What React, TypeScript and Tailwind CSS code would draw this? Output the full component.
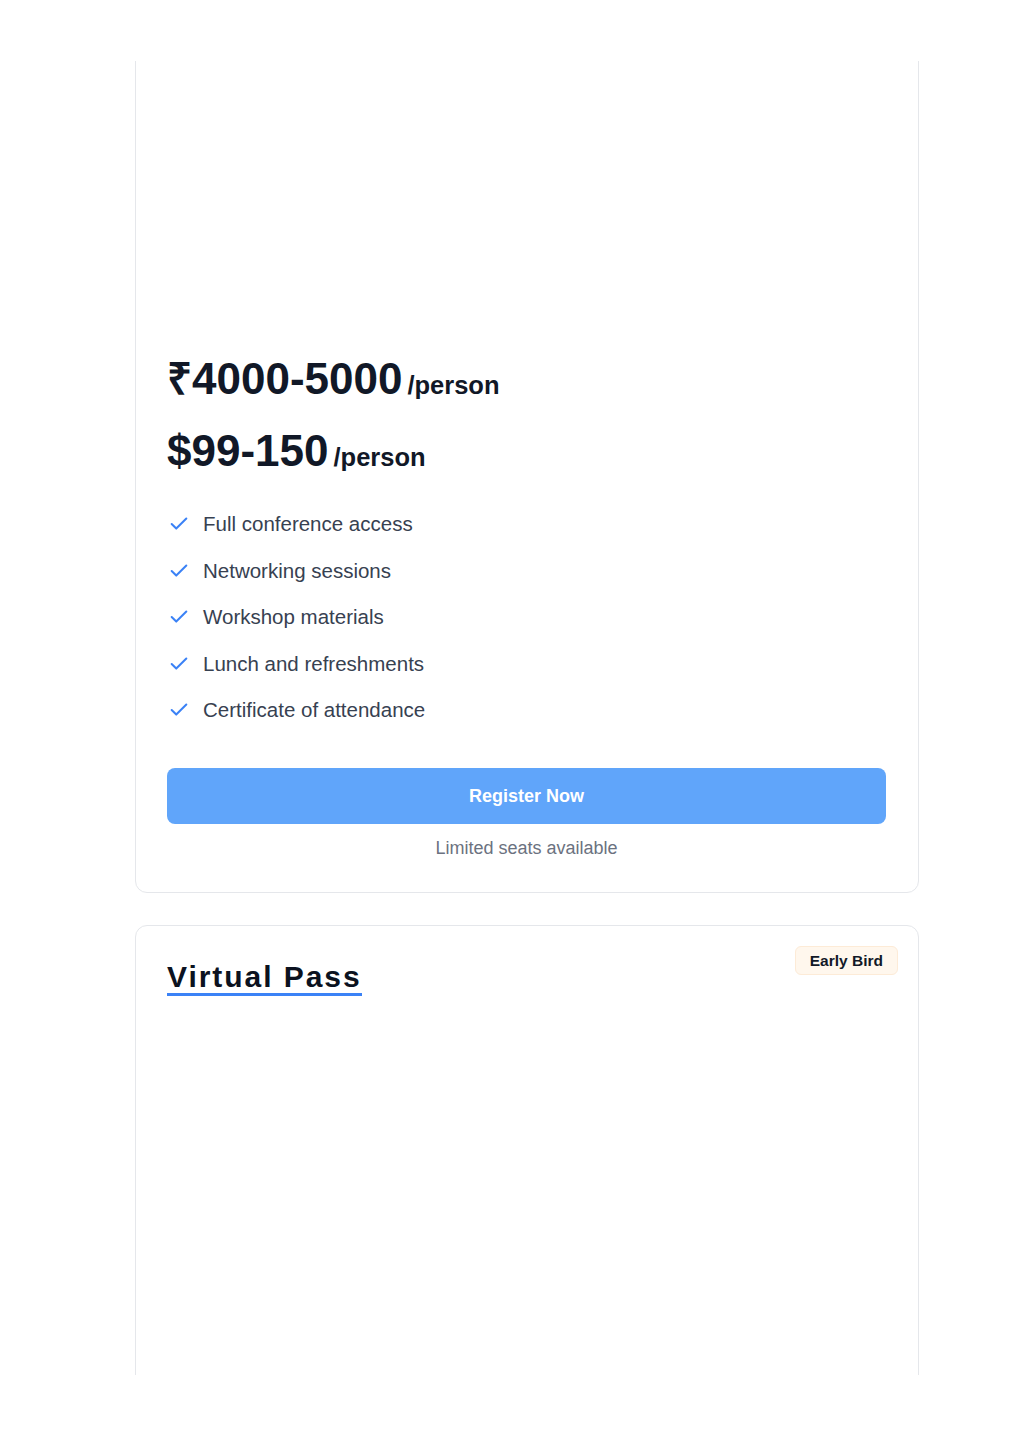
import React from "react";

const features = [
  "Full conference access",
  "Networking sessions",
  "Workshop materials",
  "Lunch and refreshments",
  "Certificate of attendance",
];

function CheckIcon() {
  return (
    <svg width="22" height="22" viewBox="0 0 24 24" fill="none" stroke="#3b82f6" strokeWidth="2.2" strokeLinecap="round" strokeLinejoin="round" className="shrink-0">
      <path d="M20 6 9 17l-5-5" />
    </svg>
  );
}

export default function App() {
  return (
    <div className="bg-white min-h-[1449px] pt-[61px] font-['Liberation_Sans',Arial,sans-serif]">
      <div className="h-[1314px] overflow-hidden">
        <div className="ml-[135px] w-[784px] flex flex-col gap-8 -mt-[40px]">
          <div className="border border-gray-200 rounded-xl bg-white pl-[31px] pr-8 pb-[30px] pt-[329px]">
            <div className="flex items-baseline gap-[5px] text-[#111827]">
              <span className="text-[44px] font-bold leading-[56px]">₹4000-5000</span>
              <span className="text-[25.5px] font-bold">/person</span>
            </div>
            <div className="flex items-baseline gap-[5px] text-[#111827] mt-4">
              <span className="text-[44px] font-bold leading-[56px]">$99-150</span>
              <span className="text-[25.5px] font-bold">/person</span>
            </div>
            <ul className="mt-[31px] flex flex-col gap-[18.5px]">
              {features.map((f) => (
                <li key={f} className="flex items-center gap-[13px] pl-px text-[20.5px] text-[#374151] leading-7">
                  <CheckIcon />
                  <span>{f}</span>
                </li>
              ))}
            </ul>
            <button className="mt-11 w-full h-14 rounded-lg bg-[#60a5fa] text-white text-lg font-bold">
              Register Now
            </button>
            <p className="mt-[10px] text-center text-lg text-[#6b7280]">Limited seats available</p>
          </div>
          <div className="border border-gray-200 rounded-xl bg-white pl-[31px] pr-8 pt-[34px] pb-8 h-[800px] relative">
            <span className="absolute top-[20px] right-[20px] px-[14px] py-[2px] rounded-md bg-[#fff7ed] border border-[#fdebd7] text-[15.5px] font-bold text-[#111827]">
              Early Bird
            </span>
            <h2 className="inline-block text-3xl font-bold tracking-[0.065em] text-[#0b1220] border-b-[3px] border-[#3b82f6] leading-[33px]">
              Virtual Pass
            </h2>
          </div>
        </div>
      </div>
    </div>
  );
}
